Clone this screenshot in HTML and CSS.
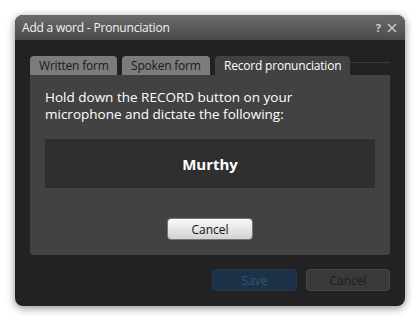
FILE: index.html
```html
<!DOCTYPE html>
<html lang="en">
<head>
  <meta charset="UTF-8">
  <title>Add a word - Pronunciation</title>
  <link rel="stylesheet" href="styles.css">
</head>
<body>
  <div class="okno">
    <div class="pasek">
      <span class="tytul">Add a word - Pronunciation</span>
      <span class="ikony">
        <span class="pomoc">?</span>
        <svg class="zamknij" width="10" height="10" viewBox="0 0 10 10">
          <path d="M1 1 L9 9 M9 1 L1 9" stroke="#d0d0d0" stroke-width="1.4" fill="none"/>
        </svg>
      </span>
    </div>

    <div class="tresc">
      <div class="zakladki">
        <div class="zakladka">Written form</div>
        <div class="zakladka">Spoken form</div>
        <div class="zakladka aktywna">Record pronunciation</div>
        <div class="reszta"></div>
      </div>

      <div class="panel">
        <p class="opis">Hold down the RECORD button on your<br>microphone and dictate the following:</p>
        <div class="slowo">Murthy</div>
        <div class="srodek">
          <button class="przycisk jasny">Cancel</button>
        </div>
      </div>

      <div class="dol">
        <button class="przycisk zapisz">Save</button>
        <button class="przycisk ciemny">Cancel</button>
      </div>
    </div>
  </div>
</body>
</html>
```

FILE: styles.css
```css
body {
  margin: 0;
  background-color: #fff;
  font-family: "Open Sans", "Noto Sans", sans-serif;
}

.okno {
  width: 390px;
  height: 291px;
  margin: 15px;
  background-color: #222;
  border-radius: 8px;
  box-shadow: 0 2px 8px rgba(0, 0, 0, 0.45);
  overflow: hidden;
  display: flex;
  flex-direction: column;
}

.pasek {
  height: 25px;
  background: linear-gradient(#6b6b6b, #4a4a4a);
  display: flex;
  align-items: center;
  justify-content: space-between;
  padding: 0 8px 0 7px;
}

.tytul {
  color: #f2f2f2;
  font-size: 12px;
  letter-spacing: -0.2px;
}

.ikony {
  display: flex;
  align-items: center;
  gap: 6px;
}

.pomoc {
  color: #d0d0d0;
  font-size: 11px;
  font-weight: bold;
}

.tresc {
  padding: 16px 15px 15px;
  display: flex;
  flex-direction: column;
}

.zakladki {
  display: flex;
  gap: 5px;
  height: 19px;
}

.zakladka {
  background-color: #7c7c7c;
  color: #1a1a1a;
  font-size: 12px;
  letter-spacing: -0.2px;
  padding: 0 9px;
  line-height: 19px;
  border-radius: 4px 4px 0 0;
  white-space: nowrap;
}

.zakladka:first-child {
  width: 87px;
  box-sizing: border-box;
}

.zakladka:nth-child(2) {
  width: 88px;
  box-sizing: border-box;
}

.zakladka.aktywna {
  background-color: #424242;
  color: #fff;
  width: 135px;
  box-sizing: border-box;
}

.reszta {
  flex: 1;
  margin-left: -5px;
  margin-top: 6px;
  height: 0;
  border-top: 1px solid #3a3a3a;
}

.panel {
  background-color: #424242;
  height: 180px;
  padding: 0 15px;
  border-radius: 0 0 3px 3px;
}

.opis {
  margin: 14px 0 0;
  color: #fff;
  font-size: 13.5px;
  line-height: 17px;
}

.slowo {
  margin-top: 16px;
  height: 49px;
  background-color: #2f2f2f;
  color: #fff;
  font-size: 15px;
  font-weight: bold;
  display: flex;
  align-items: center;
  justify-content: center;
}

.srodek {
  display: flex;
  justify-content: center;
  margin-top: 30px;
}

.przycisk {
  width: 86px;
  height: 22px;
  border-radius: 4px;
  font-family: inherit;
  font-size: 12px;
  padding: 0;
}

.jasny {
  background: linear-gradient(#fafafa, #d2d2d2);
  border: 1px solid #777;
  color: #111;
}

.dol {
  display: flex;
  justify-content: flex-end;
  gap: 9px;
  margin-top: 14px;
}

.zapisz {
  width: 85px;
  background-color: #1c3249;
  border: 1px solid #253a50;
  color: #3a5570;
}

.ciemny {
  width: 84px;
  background-color: #3a3a3a;
  border: 1px solid #474747;
  color: #1c1c1c;
}
```
